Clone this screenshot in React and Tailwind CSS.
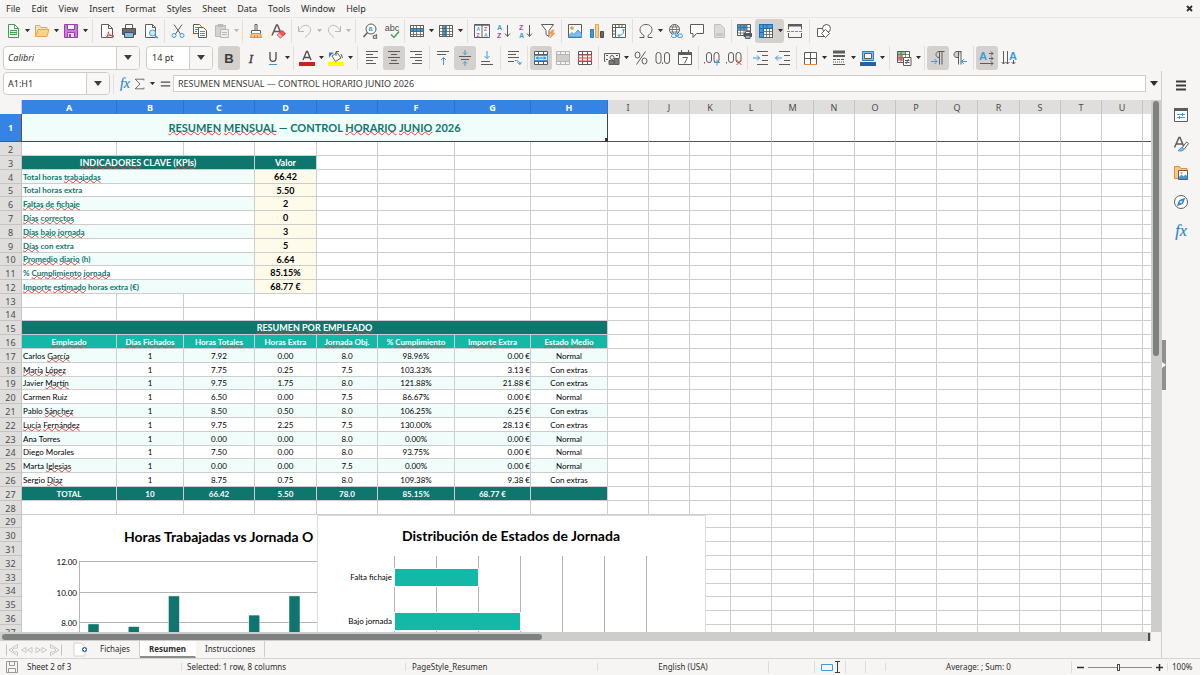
import React, { useState } from 'react';
import clsx from 'clsx';

const MENUS = ['File', 'Edit', 'View', 'Insert', 'Format', 'Styles', 'Sheet', 'Data', 'Tools', 'Window', 'Help'];

const G = '#5c5c5a';
const BLUE = '#3d9bdc';
const LIGHT = '#83beec';
const RED = '#e0413c';

const gridLines = <path d="M1.5 2.5h13v11h-13zM1.5 5.5h13M1.5 8.5h13M1.5 11.5h13M4.5 2.5v11M7.5 2.5v11M11.5 2.5v11" strokeWidth=".8" />;

const ICONS = {
  new: (
    <>
      <path d="M3.5 1.5h6l4 4v9h-10z" fill="#fff" stroke="#3f9e52" />
      <path d="M9.5 1.5v4h4" stroke="#3f9e52" />
      <path d="M5 7h7v5H5z" fill="#3f9e52" stroke="none" />
      <path d="M5.5 8.5h6M5.5 10.5h6" stroke="#d6f0db" />
    </>
  ),
  open: (
    <>
      <path d="M1.5 13.5v-11h4l1.5 2h6v3" fill="#fbe3b4" stroke="#e8a552" />
      <path d="M1.5 13.5l2.5-7h11l-2 7z" fill="#f9d48c" stroke="#e8a552" />
    </>
  ),
  save: (
    <>
      <path d="M1.5 1.5h13v13h-13z" fill="#c97bd6" stroke="#9a3fb0" />
      <path d="M4.5 1.5h7v5h-7z" fill="#fff" stroke="#9a3fb0" />
      <path d="M4.5 9.5h7v5h-7z" fill="#f3e0f7" stroke="#9a3fb0" />
      <path d="M6 11h2v3H6z" fill="#9a3fb0" stroke="none" />
    </>
  ),
  pdf: (
    <>
      <path d="M2.5 1.5h7l4 4v9h-11z" fill="#fff" />
      <path d="M9.5 1.5v4h4" />
      <path d="M7 15c1.5-2 2.5-4 2.5-6.5M9 9c1 2.5 3 4 6 4.5M7.5 13.5c2-1 4.5-1.5 7-1" stroke={RED} />
    </>
  ),
  print: (
    <>
      <path d="M4.5 5V1.5h7V5" fill="#fff" />
      <path d="M1.5 5.5h13v6h-13z" fill="#6a6d70" stroke="#4b4e50" />
      <path d="M3.5 9.5h9v5h-9z" fill={LIGHT} stroke="#4b4e50" />
    </>
  ),
  preview: (
    <>
      <path d="M2.5 1.5h7l3 3v10h-10z" fill="#fff" />
      <path d="M9.5 1.5v3h3" />
      <circle cx="9.5" cy="10" r="3" fill="#d4eafa" stroke={BLUE} />
      <path d="M11.8 12.3l3 3" stroke={BLUE} strokeWidth="1.5" />
    </>
  ),
  cut: (
    <>
      <path d="M4 1.5l6.5 9.5M12 1.5L5.5 11" />
      <circle cx="4" cy="12.5" r="2" stroke={BLUE} />
      <circle cx="12" cy="12.5" r="2" stroke={BLUE} />
    </>
  ),
  copy: (
    <>
      <path d="M1.5 1.5h6l2 2v7h-8z" fill="#fff" />
      <path d="M3 4.5h4M3 6.5h4M3 8.5h2" stroke={BLUE} />
      <path d="M6.5 4.5h5l3 3v7h-8z" fill="#fff" />
      <path d="M8 8.5h5M8 10.5h5M8 12.5h5" stroke={BLUE} />
    </>
  ),
  paste: (
    <>
      <path d="M1.5 2.5h10v11h-10z" fill="#d5d3d1" stroke="#bbb9b7" />
      <path d="M4 1.5h5v2H4z" fill="#bbb9b7" stroke="#bbb9b7" />
      <path d="M6.5 6.5h8v8h-8z" fill="#efedeb" stroke="#bbb9b7" />
      <path d="M8 9.5h5M8 11.5h5" stroke="#bbb9b7" />
    </>
  ),
  clone: (
    <>
      <path d="M7 1.5h2v6H7z" fill="#fff" />
      <path d="M3.5 7.5h9v3h-9z" fill="#fff" />
      <path d="M3.5 10.5h9l1 4h-11z" fill="#f6c392" stroke="#ed8733" />
      <path d="M6.5 12v2.5M9.5 12v2.5" stroke="#ed8733" />
    </>
  ),
  clear: (
    <>
      <path d="M2 12.5L6.5 2h1L12 12.5M3.5 8.5h6.5" strokeWidth="1.5" />
      <path d="M7 12l5-4.5 3.5 3-5 4.5z" fill="#ee5a55" stroke={RED} />
      <path d="M7 12l2-1.8 3.5 3-2 1.8z" fill="#f6a5a2" stroke="none" />
    </>
  ),
  undo: <path d="M1.5 3v5.5H7M1.5 8.5C4 2.5 9 1 12 3.5s2 6-4 11" stroke="#bbb9b7" />,
  redo: <path d="M14.5 3v5.5H9M14.5 8.5C12 2.5 7 1 4 3.5s-2 6 4 11" stroke="#bbb9b7" />,
  find: (
    <>
      <circle cx="9" cy="6" r="5" fill="#fff" />
      <path d="M5.5 9.5L1.5 14" strokeWidth="1.5" />
      <text x="6.5" y="8" fontSize="7" fontWeight="700" fill={BLUE} stroke="none">a</text>
      <text x="10.5" y="15.5" fontSize="8" fontWeight="700" fill={G} stroke="none">d</text>
    </>
  ),
  spell: (
    <>
      <text x="8" y="7.5" textAnchor="middle" fontSize="9" fill="#4c4c4a" stroke="none">abc</text>
      <path d="M7 11.5l3 3 5-6" stroke="#3aa757" strokeWidth="1.5" />
    </>
  ),
  row: (
    <>
      <path d="M1.5 2.5h13v11h-13z" fill="#fff" />
      <path d="M1 5h14v4H1z" fill={BLUE} stroke="none" />
      {gridLines}
    </>
  ),
  col: (
    <>
      <path d="M1.5 2.5h13v11h-13z" fill="#fff" />
      <path d="M5 2h4v12H5z" fill={BLUE} stroke="none" />
      {gridLines}
    </>
  ),
  sort: (
    <>
      <path d="M.5 1.5h15v13H.5z" fill="#fff" />
      <path d="M.5 2h15" strokeWidth="1.5" />
      <path d="M8 2v13" />
      <g stroke="none" fontSize="5" fontWeight="700">
        <text x="2.5" y="8" fill={BLUE}>A</text>
        <text x="2.5" y="14" fill="#a746b8">Z</text>
        <text x="10" y="8" fill="#a746b8">Z</text>
        <text x="10" y="14" fill={BLUE}>A</text>
      </g>
    </>
  ),
  asc: (
    <>
      <g stroke="none" fontSize="7" fontWeight="700">
        <text x="1" y="6.5" fill={BLUE}>A</text>
        <text x="1" y="15" fill="#a746b8">Z</text>
      </g>
      <path d="M11.5 2v11M9 10.5l2.5 3 2.5-3" />
    </>
  ),
  desc: (
    <>
      <g stroke="none" fontSize="7" fontWeight="700">
        <text x="1" y="6.5" fill="#a746b8">Z</text>
        <text x="1" y="15" fill={BLUE}>A</text>
      </g>
      <path d="M11.5 2v11M9 10.5l2.5 3 2.5-3" />
    </>
  ),
  filter: (
    <>
      <path d="M1.5 1.5h12l-4.5 6v6l-3-2v-4z" fill="#fff" />
      <path d="M12 7l-3 4h2.5L10 15l5-5h-2.5l1.5-3z" fill="#f3a14b" stroke="#ed8733" strokeWidth=".5" />
    </>
  ),
  image: (
    <>
      <path d="M1.5 1.5h13v13h-13z" fill="#fff" />
      <circle cx="5" cy="5" r="1.5" fill="#f3a14b" stroke="#ed8733" strokeWidth=".5" />
      <path d="M2 12.5l3-3 2 2 4-4.5 3.5 4V14H2z" fill={LIGHT} stroke={BLUE} />
    </>
  ),
  chart: (
    <>
      <path d="M1.5 6.5h3v8h-3z" fill={BLUE} stroke="#2a7fc0" />
      <path d="M6.5 1.5h3v13h-3z" fill="#fbd08a" stroke="#e8a552" />
      <path d="M11.5 8.5h3v6h-3z" fill="#6a6a68" stroke="#4c4c4a" />
    </>
  ),
  pivot: (
    <>
      <path d="M1.5 1.5h13v13h-13z" fill="#fff" />
      <path d="M1.5 4.5h13M4.5 1.5v13M8 1.5v3M11 1.5v3M1.5 8h3M1.5 11h3" />
      <path d="M12.5 6v3c0 2-2 3.5-5.5 3.5M11 7.5L12.5 6 14 7.5M8.5 11L7 12.5 8.5 14" stroke={BLUE} />
    </>
  ),
  omega: <path d="M1.5 14.5H6v-2C3.5 11 2 9 2 6.8 2 3.5 4.5 1.5 8 1.5s6 2 6 5.3c0 2.2-1.5 4.2-4 5.7v2h4.5" />,
  link: (
    <>
      <circle cx="7.5" cy="6.5" r="5" fill="#fff" />
      <path d="M2.5 6.5h10M3.5 4h8M3.5 9h8M7.5 1.5c-3 3-3 7 0 10M7.5 1.5c3 3 3 7 0 10" strokeWidth=".8" />
      <path d="M4 11h11v4H4z" fill="#f6f5f3" stroke="none" />
      <rect x="4.5" y="11" width="5" height="3.5" rx="1.7" stroke={BLUE} />
      <rect x="10.5" y="11" width="5" height="3.5" rx="1.7" stroke={BLUE} />
      <path d="M8 12.7h4" stroke={BLUE} />
    </>
  ),
  comment: <path d="M1.5 1.5h13v9h-7l-3.5 4v-4H1.5z" fill="#fff" />,
  headfoot: (
    <>
      <path d="M3.5 1.5h6l4 4v9h-10z" fill="#dddbd9" stroke="#c2c0be" />
      <path d="M5 10h7v3H5z" fill="#c9c7c5" stroke="none" />
    </>
  ),
  area: (
    <>
      <path d="M1.5 1.5h13v11h-13z" fill="#fff" />
      <path d="M1 1h10v6H1z" fill={BLUE} stroke="none" />
      <path d="M1.5 1.5h13v11h-13zM1.5 4.5h13M1.5 7.5h13M1.5 10h13M4.5 1.5v11M8 1.5v11M11 1.5v11" strokeWidth=".7" />
      <path d="M8 10.5h7.5v3H8z" fill="#56595c" stroke="#4b4e50" />
      <path d="M9.5 12.5H14v3H9.5z" fill={LIGHT} />
      <path d="M9.5 8.5H14v2H9.5z" fill="#fff" />
    </>
  ),
  freeze: (
    <>
      <path d="M1.5 1.5h13v13h-13z" fill="#fff" />
      <path d="M1 1h14v4H1zM1 1h4v14H1z" fill={BLUE} stroke="none" />
      <path d="M5.5 5.5h9v9h-9zM5.5 8.5h9M5.5 11.5h9M8.5 5.5v9M11.5 5.5v9" strokeWidth=".8" />
      <path d="M1.5 1.5h13v4h-9v9h-4zM5.5 1.5v4M9 1.5v4M1.5 5.5h4M1.5 9.5h4" stroke="#1f6fae" />
    </>
  ),
  split: (
    <>
      <path d="M1.5 2v4.5M14.5 2v4.5M1.5 10v4.5h13V10" />
      <path d="M1 1h14v2.5H1z" fill={G} stroke="none" />
      <path d="M0 8.5h16" stroke={BLUE} strokeDasharray="3 1" />
    </>
  ),
  shapes: (
    <>
      <path d="M1.5 5.5h8v8h-8z" fill="#fff" />
      <circle cx="10.5" cy="5.5" r="4" fill="#fff" />
      <path d="M9.5 6.5l4 4-4 4-4-4z" fill="#fff" />
    </>
  ),
  bold: <text x="8" y="13" textAnchor="middle" fontSize="13" fontWeight="700" fill="#3c3c3a" stroke="none">B</text>,
  italic: <text x="8" y="13" textAnchor="middle" fontSize="13" fontStyle="italic" fontFamily="Liberation Serif, serif" fill="#3c3c3a" stroke="#3c3c3a" strokeWidth=".3">I</text>,
  underline: (
    <>
      <path d="M5 2v6c0 4.5 6 4.5 6 0V2" strokeWidth="1.3" stroke="#4c4c4a" />
      <path d="M4 14.5h8" stroke={BLUE} />
    </>
  ),
  fontColor: (
    <>
      <path d="M4 10L7.5 1.5h1L12 10M5.2 7.5h5.6" strokeWidth="1.3" stroke="#4c4c4a" />
      <path d="M0 12h16v4H0z" fill="#c9211e" stroke="none" />
    </>
  ),
  highlight: (
    <>
      <path d="M4 6l5-3.5L13 8l-5.5 3.5z" fill="#fff" />
      <path d="M8 6V1.500h3M13 4l1.500 4" />
      <path d="M1 8V2.500h5L3 5z" fill="#2a7fc0" stroke="none" />
      <path d="M0 12h16v4H0z" fill="#ffff00" stroke="none" />
    </>
  ),
  left: <path d="M2 1.5h12M2 4.5h7M2 7.5h12M2 10.5h7M2 13.5h10" />,
  center: <path d="M2 1.5h12M5 4.5h6M2 7.5h12M5 10.5h6M3 13.5h10" />,
  right: <path d="M2 1.5h12M7 4.5h7M2 7.5h12M7 10.5h7M4 13.5h10" />,
  top: (
    <>
      <path d="M2 1.5h12M2 4.5h9" />
      <path d="M8.5 15V7.5M6 10l2.5-2.5L11 10" stroke={BLUE} />
    </>
  ),
  middle: (
    <>
      <path d="M2 6.5h12M4 9.5h8" />
      <path d="M8 0v4.5M6 2.5l2 2 2-2M8 16v-4.5M6 13.5l2-2 2 2" stroke={BLUE} />
    </>
  ),
  bottom: (
    <>
      <path d="M2 11.5h9M2 14.5h12" />
      <path d="M8 1v7.5M5.5 6L8 8.5 10.5 6" stroke={BLUE} />
    </>
  ),
  wrap: (
    <>
      <path d="M2 1.5h11M2 4.5h8M2 7.5h11M2 11.5h6" />
      <path d="M9 10.5c3 0 5 1 5 4M11.5 12.5l2.5 2 1.5-2.5" stroke={BLUE} />
    </>
  ),
  merge: (
    <>
      <path d="M1.5 1.5h13v13h-13z" fill="#fff" />
      <path d="M1.5 4.5h13M1.5 11.5h13M5.5 1.5v3M10.5 1.5v3M5.5 11.5v3M10.5 11.5v3" />
      <path d="M1.5 5.5h13v5h-13z" fill="#d4eafa" stroke={BLUE} />
      <path d="M3 8h10M5 6.5L3.5 8 5 9.5M11 6.5L12.5 8 11 9.5" stroke="#2a7fc0" />
    </>
  ),
  mergeOff: (
    <>
      <path d="M1.5 1.5h13v13h-13zM1.5 4.5h13M1.5 11.5h13M5.5 1.5v3M10.5 1.5v3M5.5 11.5v3M10.5 11.5v3" stroke="#b6b4b2" />
      <path d="M2 5h12v6H2z" fill="#d0cecc" stroke="none" />
    </>
  ),
  unmerge: (
    <>
      <path d="M1.5 1.5h13v13h-13z" fill="#fff" />
      <path d="M1.5 4.5h13M1.5 11.5h13M5.5 1.5v13M10.5 1.5v13" />
      <path d="M1.5 5h13v6h-13zM5.5 5v6M10.5 5v6M2 8h12" stroke={RED} />
    </>
  ),
  currency: (
    <>
      <path d="M1.5 11.5h-1v-8h15v5" />
      <circle cx="8" cy="7.5" r="2" />
      <path d="M2 5.5h2M12 5.5h2M2 9.5h2" />
      <path d="M5 10.5h5v4H5zM10.5 8.5H15v6h-4.5z" fill="#7a7a78" />
    </>
  ),
  percent: (
    <>
      <ellipse cx="4.5" cy="5" rx="2.5" ry="3" />
      <ellipse cx="11.5" cy="11" rx="2.5" ry="3" />
      <path d="M12.5 1.5l-9 13" />
    </>
  ),
  number: (
    <>
      <rect x="1" y="2.5" width="5" height="11" rx="2.5" />
      <rect x="9.5" y="2.5" width="5" height="11" rx="2.5" />
      <path d="M7.5 12.5V14" />
    </>
  ),
  date: (
    <>
      <path d="M1.5 2.5h13v12h-13z" fill="#fff" />
      <path d="M1 2h14v3H1z" fill={G} stroke="none" />
      <path d="M4.5 0v3M11.5 0v3" />
      <path d="M5.5 7.5h5l-3 6" />
    </>
  ),
  addDec: (
    <>
      <path d="M.5 12v1.5" />
      <rect x="2.5" y="2.5" width="5" height="10" rx="2.5" />
      <rect x="10" y="2.5" width="5" height="10" rx="2.5" />
      <path d="M13 9.5v6M10 12.5h6" stroke={BLUE} />
    </>
  ),
  delDec: (
    <>
      <path d="M.5 12v1.5" />
      <rect x="2.5" y="2.5" width="5" height="10" rx="2.5" />
      <rect x="10" y="2.5" width="5" height="10" rx="2.5" />
      <path d="M10.5 10l5 5M15.5 10l-5 5" stroke={RED} />
    </>
  ),
  indent: (
    <>
      <path d="M4 1.5h11M9 5.5h6M9 10.5h6M4 14.5h11" />
      <path d="M0 8h6.5M4 5.5L6.5 8 4 10.5" stroke={BLUE} />
    </>
  ),
  outdent: (
    <>
      <path d="M4 1.5h11M9 5.5h6M9 10.5h6M4 14.5h11" />
      <path d="M.5 8H7M3 5.5L.5 8 3 10.5" stroke={BLUE} />
    </>
  ),
  borders: (
    <>
      <path d="M2.5 14V2.5h12V14M8.5 2.5V14M2.5 8.5h12" fill="#fff" />
      <path d="M2 14.5h13" stroke="#ed8733" />
    </>
  ),
  lineStyle: (
    <>
      <path d="M2 2h12" strokeWidth="3" />
      <path d="M2 6h12" strokeWidth="2" />
      <path d="M2 9.5h12" strokeDasharray="3 1" />
      <path d="M2 12h12" strokeDasharray="1 1" />
      <path d="M2 14.5h12" />
    </>
  ),
  borderColor: (
    <>
      <path d="M2.5 1.5h11v9h-11z" fill={LIGHT} stroke="#2a7fc0" />
      <path d="M4.5 3.5h7v5h-7z" fill="#fff" stroke={G} />
      <path d="M0 12h16v4H0z" fill="#2a6099" stroke="none" />
    </>
  ),
  conditional: (
    <>
      <path d="M1.5 1.5h12v11h-12z" fill="#fff" />
      <path d="M2 2h8v3H2z" fill="#7ccf8c" stroke="none" />
      <path d="M2 5h5v6H2z" fill="#f08b88" stroke="none" />
      <path d="M1.5 1.5h12v11h-12zM1.5 4.5h12M1.5 8h12M5 1.5v11M9.5 1.5v11" strokeWidth=".7" />
      <path d="M7.5 7.5H15v8H7.5z" fill="#fff" />
      <path d="M9 10.5h4.5M9 12.5h4.5M12.5 9L10 14" />
    </>
  ),
  ltr: (
    <>
      <path d="M14.5 1.5H9c-4 0-4 6 0 6M9.5 1.5v13M12 1.5v13" />
      <path d="M1 11.5h6M4.5 9L7 11.5 4.5 14" stroke={BLUE} />
    </>
  ),
  rtl: (
    <>
      <path d="M9.5 1.5H5c-4 0-4 6 0 6h1.5M6.5 1.5v13M9 1.5v13" fill="#d0cecc" />
      <path d="M15 11.5H9.5M12 9l-2.5 2.5L12 14" stroke={BLUE} />
    </>
  ),
  horiz: (
    <>
      <text x="0" y="9.5" fontSize="11" fontWeight="700" fill={BLUE} stroke="none">A</text>
      <path d="M10 3.5h4M10 8.5h4M1 13.5h13M12 1.5l2 2-2 2M12 6.5l2 2-2 2M12 11.5l2 2-2 2" />
    </>
  ),
  vert: (
    <>
      <path d="M2.5 1v13M.5 12l2 2 2-2M6.5 1v13M4.5 12l2 2 2-2M12.5 10v4M10.5 12l2 2 2-2" />
      <text x="8" y="9.5" fontSize="11" fontWeight="700" fill={BLUE} stroke="none">A</text>
    </>
  ),
  fx: <text x="8" y="12.5" textAnchor="middle" fontSize="16" fontStyle="italic" fontFamily="Liberation Serif, serif" fill="#2a86cc" stroke="#2a86cc" strokeWidth=".2">fx</text>,
  sigma: <path d="M12.5 4V2.5h-10L8 8l-5.5 5.5h10V12" />,
  equals: <path d="M3 6.5h10M3 10.5h10" strokeWidth="1.5" stroke="#4c4c4a" />,
  burger: <path d="M3 3.5h10M3 7.5h10M3 11.5h10" strokeWidth="1.8" stroke="#3c3c3a" />,
  properties: (
    <>
      <path d="M1.5 1.5h13v13h-13z" fill="#fff" />
      <path d="M1 1h14v3H1z" fill={G} stroke="none" />
      <path d="M4 7.5h8M4 10.5h8M9.5 6v3M6.5 9v3" stroke={BLUE} />
    </>
  ),
  styles: (
    <>
      <path d="M1.5 11.5L6 1.5h1L11 11M3 8h6.5" strokeWidth="1.5" />
      <path d="M9 12l4.5-6 2 1.5-4.5 6z" fill="#fff" />
      <path d="M5 14.5c2 0 2-3 4-3l2 2c-1 1.5-4 2-6 1z" fill={LIGHT} stroke={BLUE} />
    </>
  ),
  gallery: (
    <>
      <path d="M1.5 13.5v-12h5L8 3.5h6v10z" fill="#f9c98a" stroke="#ed8733" />
      <path d="M5.5 5.5h9v9h-9z" fill="#fff" />
      <path d="M6 12l2.5-2.5 2 2 2-2L14 11v3H6z" fill={BLUE} stroke="none" />
      <circle cx="8.5" cy="8" r="1" fill="#ed8733" stroke="none" />
    </>
  ),
  navigator: (
    <>
      <circle cx="8" cy="8" r="6.5" fill="#fff" />
      <path d="M11.5 4.5l-2 5-5 2 2-5z" fill={BLUE} stroke="#2a7fc0" />
      <circle cx="8" cy="8" r="1" fill="#fff" stroke="none" />
    </>
  ),
  saveGray: <path d="M2.5 2.5h11v11h-11zM5.5 2.5v4h5v-4M4.5 13.5v-4h7v4" stroke="#9a9896" />,
};

const TOOLBAR_TOP = [
  { icon: 'new', label: 'New', menu: true },
  { icon: 'open', label: 'Open', menu: true },
  { icon: 'save', label: 'Save', menu: true },
  'wide',
  { icon: 'pdf', label: 'Export as PDF' },
  { icon: 'print', label: 'Print' },
  { icon: 'preview', label: 'Print Preview' },
  'sep',
  { icon: 'cut', label: 'Cut' },
  { icon: 'copy', label: 'Copy' },
  { icon: 'paste', label: 'Paste', menu: true, disabled: true },
  'sep',
  { icon: 'clone', label: 'Clone Formatting' },
  { icon: 'clear', label: 'Clear Direct Formatting' },
  'sep',
  { icon: 'undo', label: 'Undo', menu: true, disabled: true },
  { icon: 'redo', label: 'Redo', menu: true, disabled: true },
  'wide',
  { icon: 'find', label: 'Find and Replace' },
  { icon: 'spell', label: 'Spelling' },
  'slim',
  { icon: 'row', label: 'Row', menu: true },
  { icon: 'col', label: 'Column', menu: true },
  'wide',
  { icon: 'sort', label: 'Sort' },
  { icon: 'asc', label: 'Sort Ascending' },
  { icon: 'desc', label: 'Sort Descending' },
  { icon: 'filter', label: 'AutoFilter' },
  'sep',
  { icon: 'image', label: 'Insert Image' },
  { icon: 'chart', label: 'Insert Chart' },
  { icon: 'pivot', label: 'Insert Pivot Table' },
  'sep',
  { icon: 'omega', label: 'Special Character', menu: true },
  { icon: 'link', label: 'Insert Hyperlink' },
  { icon: 'comment', label: 'Insert Comment' },
  { icon: 'headfoot', label: 'Headers and Footers', disabled: true },
  'slim',
  { icon: 'area', label: 'Define Print Area' },
  { icon: 'freeze', label: 'Freeze Rows and Columns', menu: true, active: true },
  { icon: 'split', label: 'Split Window' },
  'wide',
  { icon: 'shapes', label: 'Show Draw Functions' },
];

const TOOLBAR_FORMAT = [
  { icon: 'bold', label: 'Bold', active: true },
  { icon: 'italic', label: 'Italic' },
  { icon: 'underline', label: 'Underline', menu: true },
  'sep',
  { icon: 'fontColor', label: 'Font Color', menu: true },
  { icon: 'highlight', label: 'Background Color', menu: true },
  'wide',
  { icon: 'left', label: 'Align Left' },
  { icon: 'center', label: 'Center Horizontally', active: true },
  { icon: 'right', label: 'Align Right' },
  'sep',
  { icon: 'top', label: 'Align Top' },
  { icon: 'middle', label: 'Center Vertically', active: true },
  { icon: 'bottom', label: 'Align Bottom' },
  'sep',
  { icon: 'wrap', label: 'Wrap Text' },
  'sep',
  { icon: 'merge', label: 'Merge and Center Cells', active: true },
  { icon: 'mergeOff', label: 'Merge Cells', disabled: true },
  { icon: 'unmerge', label: 'Unmerge Cells' },
  'sep',
  { icon: 'currency', label: 'Format as Currency', menu: true },
  { icon: 'percent', label: 'Format as Percent' },
  { icon: 'number', label: 'Format as Number' },
  { icon: 'date', label: 'Format as Date' },
  'sep',
  { icon: 'addDec', label: 'Add Decimal Place' },
  { icon: 'delDec', label: 'Delete Decimal Place' },
  'sep',
  { icon: 'indent', label: 'Increase Indent' },
  { icon: 'outdent', label: 'Decrease Indent' },
  'sep',
  { icon: 'borders', label: 'Borders', menu: true },
  { icon: 'lineStyle', label: 'Border Style', menu: true },
  { icon: 'borderColor', label: 'Border Color', menu: true },
  'wide',
  { icon: 'conditional', label: 'Conditional', menu: true },
  'sep',
  { icon: 'ltr', label: 'Left-To-Right', active: true },
  { icon: 'rtl', label: 'Right-To-Left' },
  'sep',
  { icon: 'horiz', label: 'Text direction from left to right', active: true },
  { icon: 'vert', label: 'Text direction from top to bottom' },
];

const SEPARATOR_WIDTHS = { slim: 'w-[3px]', sep: 'w-[5px]', wide: 'w-[7px]' };

const COLUMNS = [
  ['A', 95], ['B', 67], ['C', 71], ['D', 62], ['E', 61], ['F', 77], ['G', 76], ['H', 77],
  ['I', 41], ['J', 41], ['K', 41], ['L', 41], ['M', 42], ['N', 41], ['O', 41], ['P', 41],
  ['Q', 41], ['R', 42], ['S', 41], ['T', 41], ['U', 41], ['V', 41],
];
const HEADER_WIDTH = 22;
const TABLE_WIDTH = COLUMNS.reduce((sum, [, w]) => sum + w, HEADER_WIDTH);
const ROWS = Array.from({ length: 40 }, (_, i) => i + 1);
const SHORT_ROWS = [5, 10, 14, 19, 24, 29, 34, 39];

// words between asterisks are flagged by the spell checker
const KPIS = [
  ['Total horas *trabajadas*', '66.42'],
  ['Total horas extra', '5.50'],
  ['*Faltas* *de* *fichaje*', '2'],
  ['*Días* *correctos*', '0'],
  ['*Días* *bajo* *jornada*', '3'],
  ['*Días* con extra', '5'],
  ['*Promedio* *diario* (h)', '6.64'],
  ['% *Cumplimiento* *jornada*', '85.15%'],
  ['*Importe* *estimado* horas extra (€)', '68.77 €'],
];

const EMPLOYEE_HEAD = [
  '*Empleado*', '*Días* *Fichados*', 'Horas *Totales*', 'Horas Extra', '*Jornada* Obj.', '% *Cumplimiento*', '*Importe* Extra', '*Estado* *Medio*',
];

const EMPLOYEES = [
  ['Carlos *García*', '1', '7.92', '0.00', '8.0', '98.96%', '0.00 €', 'Normal'],
  ['*María* *López*', '1', '7.75', '0.25', '7.5', '103.33%', '3.13 €', 'Con extras'],
  ['Javier *Martín*', '1', '9.75', '1.75', '8.0', '121.88%', '21.88 €', 'Con extras'],
  ['Carmen Ruiz', '1', '6.50', '0.00', '7.5', '86.67%', '0.00 €', 'Normal'],
  ['Pablo *Sánchez*', '1', '8.50', '0.50', '8.0', '106.25%', '6.25 €', 'Con extras'],
  ['*Lucía* *Fernández*', '1', '9.75', '2.25', '7.5', '130.00%', '28.13 €', 'Con extras'],
  ['Ana Torres', '1', '0.00', '0.00', '8.0', '0.00%', '0.00 €', 'Normal'],
  ['Diego Morales', '1', '7.50', '0.00', '8.0', '93.75%', '0.00 €', 'Normal'],
  ['Marta *Iglesias*', '1', '0.00', '0.00', '7.5', '0.00%', '0.00 €', 'Normal'],
  ['Sergio *Díaz*', '1', '8.75', '0.75', '8.0', '109.38%', '9.38 €', 'Con extras'],
];

const TOTALS = ['TOTAL', '10', '66.42', '5.50', '78.0', '85.15%', '68.77 €', ''];

const Icon = ({ name, className = 'size-4' }) => (
  <svg
    viewBox="0 0 16 16"
    className={clsx("shrink-0 overflow-visible font-['Liberation_Sans',sans-serif]", className)}
    fill="none"
    stroke={G}
    strokeWidth="1"
    aria-hidden="true"
  >
    {ICONS[name]}
  </svg>
);

const Caret = ({ className = 'w-[5px]' }) => (
  <svg viewBox="0 0 8 5" className={className} fill="currentColor" aria-hidden="true">
    <path d="M0 0h8L4 5z" />
  </svg>
);

const ToolButton = ({ item }) => (
  <div className={clsx('flex h-6 shrink-0 items-center rounded-[3px]', item.active && 'bg-[#d3d0cd]')}>
    <button type="button" aria-label={item.label} disabled={item.disabled} className="flex h-6 w-[22px] items-center justify-center">
      <Icon name={item.icon} />
    </button>
    {item.menu && (
      <button
        type="button"
        aria-label={`${item.label} options`}
        className={clsx('flex h-6 w-[7px] items-center justify-center', item.disabled ? 'text-[#bbb9b7]' : 'text-[#2e2e2c]')}
      >
        <Caret />
      </button>
    )}
  </div>
);

const Toolbar = ({ items }) =>
  items.map((item, i) =>
    typeof item === 'string' ? (
      <span key={i} className={clsx('flex h-6 shrink-0 justify-center', SEPARATOR_WIDTHS[item])}>
        <span className="w-px bg-[#e2e0de]" />
      </span>
    ) : (
      <ToolButton key={i} item={item} />
    )
  );

const ComboBox = ({ label, value, className, inputClass }) => (
  <div className={clsx('flex shrink-0 overflow-hidden rounded-[4px] border border-[#cfccc9] bg-white', className)}>
    <input aria-label={label} defaultValue={value} className={clsx('min-w-0 flex-1 text-[#2e2e2c] outline-none', inputClass)} />
    <button type="button" aria-label={`${label} list`} className="flex w-[23px] items-center justify-center border-l border-[#cfccc9] bg-[#f8f7f6] text-[#3c3c3a]">
      <Caret className="w-2" />
    </button>
  </div>
);

const Spelled = ({ text }) =>
  text.split('*').map((part, i) =>
    i % 2 ? (
      <span key={i} className="underline decoration-[#e0413c] decoration-wavy decoration-1 underline-offset-[-1px] [text-decoration-skip-ink:none]">
        {part}
      </span>
    ) : (
      part
    )
  );

const Cell = ({ text = '', className, ...rest }) => (
  <td className={clsx('border-r border-b border-[#cdcdcd] p-0 leading-none whitespace-nowrap', className)} {...rest}>
    <Spelled text={text} />
  </td>
);

const BlankCells = ({ from, row }) =>
  COLUMNS.slice(from).map(([name]) => (
    <td key={name} className={clsx('border-r border-b p-0', row === 1 ? 'border-r-[#cdcdcd] border-b-[#555]' : 'border-[#cdcdcd]')} />
  ));

const RowCells = ({ row }) => {
  if (row === 1) {
    return (
      <>
        <td colSpan={8} className="relative border-r border-b border-[#444] bg-[#f0fdfa] p-0 text-center text-[11px] leading-none font-bold text-[#0f766e]">
          <Spelled text="*RESUMEN* *MENSUAL* — CONTROL *HORARIO* *JUNIO* 2026" />
          <span className="absolute -right-px bottom-0 size-[3px] bg-[#333]" />
        </td>
        <BlankCells from={8} row={row} />
      </>
    );
  }
  if (row === 3) {
    return (
      <>
        <Cell colSpan={3} text="*INDICADORES* CLAVE (*KPIs*)" className="bg-[#0f766e] text-center text-[9px] font-bold text-white" />
        <Cell text="Valor" className="bg-[#0f766e] text-center text-[9px] font-bold text-white" />
        <BlankCells from={4} />
      </>
    );
  }
  if (row >= 4 && row <= 12) {
    const [label, value] = KPIS[row - 4];
    return (
      <>
        <Cell colSpan={3} text={label} className={clsx('pl-px text-[8px] font-bold text-[#0f766e]', row % 2 === 0 && 'bg-[#f0fdfa]')} />
        <Cell text={value} className="bg-[#fffbeb] text-center text-[9px] font-bold text-black" />
        <BlankCells from={4} />
      </>
    );
  }
  if (row === 15) {
    return (
      <>
        <Cell colSpan={8} text="*RESUMEN* *POR* *EMPLEADO*" className="bg-[#0f766e] text-center text-[9px] font-bold text-white" />
        <BlankCells from={8} />
      </>
    );
  }
  if (row === 16 || row === 27) {
    const values = row === 16 ? EMPLOYEE_HEAD : TOTALS;
    return (
      <>
        {values.map((value, i) => (
          <Cell key={i} text={value} className={clsx('text-center text-[8px] font-bold text-white', row === 16 ? 'bg-[#14b8a6]' : 'bg-[#0f766e]')} />
        ))}
        <BlankCells from={8} />
      </>
    );
  }
  if (row >= 17 && row <= 26) {
    return (
      <>
        {EMPLOYEES[row - 17].map((value, i) => (
          <Cell
            key={i}
            text={value}
            className={clsx(
              'text-[8px] text-black',
              i === 0 ? 'pl-px text-left' : i === 6 ? 'text-right' : 'text-center',
              row % 2 === 1 && 'bg-[#f0fdfa]'
            )}
          />
        ))}
        <BlankCells from={8} />
      </>
    );
  }
  return <BlankCells from={0} row={row} />;
};

const SheetTable = () => (
  <table className="table-fixed border-separate border-spacing-0 font-[Lato,sans-serif]" style={{ width: TABLE_WIDTH }}>
    <colgroup>
      <col style={{ width: HEADER_WIDTH }} />
      {COLUMNS.map(([name, width]) => (
        <col key={name} style={{ width }} />
      ))}
    </colgroup>
    <thead className="font-['Noto_Sans',sans-serif]">
      <tr className="h-[14px]">
        <td className="border-r border-[#cdcdcd] bg-[#f6f5f3] p-0" />
        {COLUMNS.map(([name], i) => (
          <th
            key={name}
            scope="col"
            className={clsx(
              'border-r p-0 text-[9px] leading-none',
              i < 8 ? 'border-[#2f6fc4] bg-[#3584e4] font-bold text-white' : 'border-[#c4c4c2] bg-[#dfdedc] font-normal text-[#4c4c4a]'
            )}
          >
            {name}
          </th>
        ))}
      </tr>
    </thead>
    <tbody>
      {ROWS.map((row) => (
        <tr key={row} className={clsx(row === 1 ? 'h-7' : SHORT_ROWS.includes(row) ? 'h-[13px]' : 'h-[14px]')}>
          <th
            scope="row"
            className={clsx(
              "border-r border-b p-0 font-['Noto_Sans',sans-serif] text-[9px] leading-none",
              row === 1 ? 'border-[#555] bg-[#3584e4] font-bold text-white' : 'border-[#c4c4c2] bg-[#dfdedc] pt-px font-normal text-[#4c4c4a]'
            )}
          >
            {row}
          </th>
          <RowCells row={row} />
        </tr>
      ))}
    </tbody>
  </table>
);

const HOURS = [7.92, 7.75, 9.75, 6.5, 8.5, 9.75];

const HoursChart = () => (
  <svg width="384" height="240" className="absolute top-[415px] left-[22px] bg-white font-[Lato,sans-serif]" role="img" aria-label="Horas Trabajadas vs Jornada">
    <text x="102" y="27" fontSize="14" fontWeight="700" fill="#000">Horas Trabajadas vs Jornada O</text>
    {[12, 10, 8, 6].map((value) => {
      const y = Math.round(46 + (12 - value) * 15.3) + 0.5;
      return (
        <g key={value}>
          <path d={`M57 ${y}H380`} stroke="#b3b3b3" />
          <text x="55" y={y + 3} fontSize="8" textAnchor="end" fill="#000">{value.toFixed(2)}</text>
        </g>
      );
    })}
    <path d="M57.5 46V240" stroke="#b3b3b3" />
    {HOURS.map((hours, i) => (
      <rect key={i} x={66 + i * 40.2} y={46.5 + (12 - hours) * 15.3} width="11" height="200" fill="#0f766e" stroke="#fff" strokeWidth=".5" />
    ))}
  </svg>
);

const STATES = [
  ['Falta fichaje', 2],
  ['Bajo jornada', 3],
];

const StatesChart = () => (
  <svg width="389" height="240" className="absolute top-[415px] left-[317px] border-t border-r border-l border-[#dcdcdc] bg-white font-[Lato,sans-serif]" role="img" aria-label="Distribución de Estados de Jornada">
    <text x="193" y="25" fontSize="14" fontWeight="700" textAnchor="middle" fill="#000">Distribución de Estados de Jornada</text>
    {[0, 1, 2, 3, 4, 5, 6].map((n) => (
      <path key={n} d={`M${76.5 + n * 42} 40V240`} stroke="#b3b3b3" />
    ))}
    {STATES.map(([name, count], i) => (
      <g key={name}>
        <rect x="76" y={52 + i * 44} width={count * 42 + 1} height="19" fill="#fff" />
        <rect x="77" y={53 + i * 44} width={count * 42 - 1} height="17" fill="#14b8a6" />
        <text x="74" y={64 + i * 44} fontSize="8" textAnchor="end" fill="#000">{name}</text>
      </g>
    ))}
  </svg>
);

const NavIcon = ({ d, label }) => (
  <button type="button" aria-label={label} disabled className="h-4 w-[15px]">
    <svg viewBox="0 0 15 16" className="h-4 w-[15px]" fill="#fff" stroke="#c6c4c2" strokeWidth="1">
      <path d={d} />
    </svg>
  </button>
);

const SheetTabs = () => {
  const [active, setActive] = useState('Resumen');
  return (
    <div className="flex h-[17px] shrink-0 items-stretch text-[8px] text-[#2e2e2c]">
      <div className="flex items-center pl-1">
        <NavIcon label="First sheet" d="M2.5 2.5v11M13.5 2.5L5 8l8.500 5.500V10H10L8 8l2-2h3.500z" />
        <NavIcon label="Previous sheet" d="M7 5.5L2.5 8 7 10.5zM13 5.5L8.5 8l4.500 2.500z" />
        <NavIcon label="Next sheet" d="M2 5.5L6.5 8 2 10.5zM8 5.5L12.500 8 8 10.5z" />
        <NavIcon label="Last sheet" d="M12.5 2.5v11M1.5 2.5L10 8l-8.500 5.500V10H5l2-2-2-2H1.500z" />
      </div>
      <button type="button" aria-label="Add sheet" className="ml-[7px] w-5">
        <svg viewBox="0 0 20 17" className="h-[17px] w-5">
          <path d="M3 2h7l4 4v9H3z" fill="#fff" stroke="#d6d4d2" />
          <circle cx="13.5" cy="8.5" r="2.5" fill="#2a6bc4" />
          <path d="M13.5 7v3M12 8.5h3" stroke="#fff" />
        </svg>
      </button>
      <div role="tablist" className="flex">
        {['Fichajes', 'Resumen', 'Instrucciones'].map((name) => (
          <button
            key={name}
            type="button"
            role="tab"
            aria-selected={active === name}
            onClick={() => setActive(name)}
            className={clsx('border-r border-b-2 px-[9px]', active === name ? 'border-r-transparent border-b-[#8b8d8c] bg-white font-bold' : 'border-r-[#cfccc9] border-b-transparent')}
          >
            {name}
          </button>
        ))}
      </div>
    </div>
  );
};

const Sidebar = () => (
  <aside className="flex shrink-0">
    <div className="flex w-[5px] items-center border-l border-[#d0cecb]">
      <button type="button" aria-label="Toggle sidebar" className="flex h-[50px] w-1 items-center justify-center bg-[#8f908f]">
        <svg viewBox="0 0 4 6" className="h-1.5 w-1" fill="#fff">
          <path d="M0 0l4 3-4 3z" />
        </svg>
      </button>
    </div>
    <div className="flex w-[34px] flex-col items-center gap-[13px] pt-[7px] pr-1">
      {[['burger', 'Sidebar Settings'], ['properties', 'Properties'], ['styles', 'Styles'], ['gallery', 'Gallery'], ['navigator', 'Navigator'], ['fx', 'Functions']].map(([icon, label]) => (
        <button key={icon} type="button" aria-label={label} className="size-4">
          <Icon name={icon} />
        </button>
      ))}
    </div>
  </aside>
);

const FormulaBar = () => (
  <div className="flex h-[29px] shrink-0 items-center pb-1">
    <ComboBox label="Name Box" value="A1:H1" className="ml-[3px] h-[23px] w-[107px]" inputClass="pl-1 text-[9px]" />
    <span className="ml-[3px] h-5 w-px bg-[#e2e0de]" />
    <button type="button" aria-label="Function Wizard" className="ml-1 flex">
      <Icon name="fx" className="size-[14px]" />
    </button>
    <button type="button" aria-label="Select Function" className="ml-px flex items-center gap-[3px] text-[#2e2e2c]">
      <Icon name="sigma" className="size-[14px]" />
      <Caret />
    </button>
    <button type="button" aria-label="Formula" className="ml-[3px] flex">
      <Icon name="equals" className="size-[15px]" />
    </button>
    <input
      aria-label="Input line"
      defaultValue="RESUMEN MENSUAL — CONTROL HORARIO JUNIO 2026"
      className="h-[17px] min-w-0 flex-1 border border-[#d0cecb] bg-white pl-1 text-[9px] text-[#3c3c3a] outline-none"
    />
    <button type="button" aria-label="Expand Formula Bar" className="flex w-[15px] justify-center text-[#2e2e2c]">
      <Caret className="w-2" />
    </button>
  </div>
);

const StatusBar = () => (
  <footer className="flex h-[17px] shrink-0 items-center border-t border-[#d6d4d2] text-[8px] leading-none text-[#2e2e2c]">
    <div className="flex w-[181px] items-center gap-[7px] pl-1">
      <Icon name="saveGray" />
      <span>Sheet 2 of 3</span>
    </div>
    <div className="w-[224px] border-l border-[#dedcda] pl-[5px]">Selected: 1 row, 8 columns</div>
    <div className="w-[192px] border-l border-[#dedcda] pl-[6px]">PageStyle_Resumen</div>
    <div className="min-w-0 flex-1 border-l border-[#dedcda] text-center">English (USA)</div>
    <div className="h-3 w-[46px] border-l border-[#dedcda]" />
    <div className="flex w-[31px] justify-center border-l border-[#dedcda]">
      <svg viewBox="0 0 22 12" className="h-3 w-[22px]" fill="none">
        <path d="M2.5 3.5h11v6h-11z" stroke={BLUE} />
        <path d="M16 .5h5M16 11.5h5M18.5 .5v11" stroke="#3c3c3a" />
      </svg>
    </div>
    <div className="h-3 w-5 border-l border-[#dedcda]" />
    <div className="h-3 w-5 border-l border-[#dedcda]" />
    <div className="w-[186px] border-l border-[#dedcda] text-center">Average: ; Sum: 0</div>
    <div className="flex w-24 items-center justify-center gap-1 border-l border-[#dedcda] text-[#2e2e2c]">
      <button type="button" aria-label="Zoom out" className="flex">
        <svg viewBox="0 0 7 7" className="size-[7px]" stroke="currentColor" strokeWidth="1.5"><path d="M0 3.5h7" /></svg>
      </button>
      <input
        type="range"
        aria-label="Zoom"
        defaultValue="49"
        className="h-3 w-16 appearance-none bg-[linear-gradient(#8b8d8c,#8b8d8c)] bg-[length:100%_1px] bg-center bg-no-repeat [&::-webkit-slider-thumb]:h-[7px] [&::-webkit-slider-thumb]:w-[3px] [&::-webkit-slider-thumb]:appearance-none [&::-webkit-slider-thumb]:border [&::-webkit-slider-thumb]:border-[#4c4c4a] [&::-webkit-slider-thumb]:bg-white"
      />
      <button type="button" aria-label="Zoom in" className="flex">
        <svg viewBox="0 0 7 7" className="size-[7px]" stroke="currentColor" strokeWidth="1.5"><path d="M0 3.5h7M3.5 0v7" /></svg>
      </button>
    </div>
    <div className="w-[33px] border-l border-[#dedcda] pl-1">100%</div>
  </footer>
);

const App = () => (
  <div className="flex h-screen flex-col overflow-hidden bg-[#f6f5f3] font-['Noto_Sans',sans-serif]">
    <header className="shrink-0">
      <div className="flex h-[17px] items-center justify-between pr-[7px] pl-[6px] text-[9px] text-[#2e2e2c]">
        <nav className="flex gap-[11px]">
          {MENUS.map((menu) => (
            <button key={menu} type="button">{menu}</button>
          ))}
        </nav>
        <button type="button" aria-label="Close document" className="flex">
          <svg viewBox="0 0 7 7" className="size-[7px]" stroke="#2e2e2c" strokeWidth="1.8"><path d="M1 1l5 5M6 1L1 6" /></svg>
        </button>
      </div>
      <div className="flex h-[27px] items-center border-t border-[#e9e7e5] pl-[2px]">
        <Toolbar items={TOOLBAR_TOP} />
      </div>
      <div className="flex h-[27px] items-center pl-[3px]">
        <ComboBox label="Font Name" value="Calibri" className="h-6 w-[137px]" inputClass="pl-1 text-[9px] italic" />
        <ComboBox label="Font Size" value="14 pt" className="ml-[6px] h-6 w-[67px]" inputClass="pl-[5px] text-[9px]" />
        <span className="w-[5px]" />
        <Toolbar items={TOOLBAR_FORMAT} />
      </div>
    </header>
    <div className="flex min-h-0 flex-1">
      <main className="flex min-w-0 flex-1 flex-col">
        <FormulaBar />
        <div className="flex min-h-0 flex-1">
          <div className="relative min-w-0 flex-1 overflow-hidden bg-white">
            <SheetTable />
            <HoursChart />
            <StatesChart />
          </div>
          <div className="w-[10px] shrink-0 bg-[#cdcdcc] px-[2px] pt-px">
            <div className="h-[48%] rounded-full bg-[#7f8180]" />
          </div>
        </div>
        <div className="mr-[10px] flex h-[9px] shrink-0 items-center justify-between bg-[#cdcdcc] pr-px pl-[2px]">
          <div className="h-[6px] w-[47%] rounded-full bg-[#7f8180]" />
          <div className="h-2 w-[2px] bg-[#4c4c4a]" />
        </div>
        <SheetTabs />
      </main>
      <Sidebar />
    </div>
    <StatusBar />
  </div>
);

export default App;
